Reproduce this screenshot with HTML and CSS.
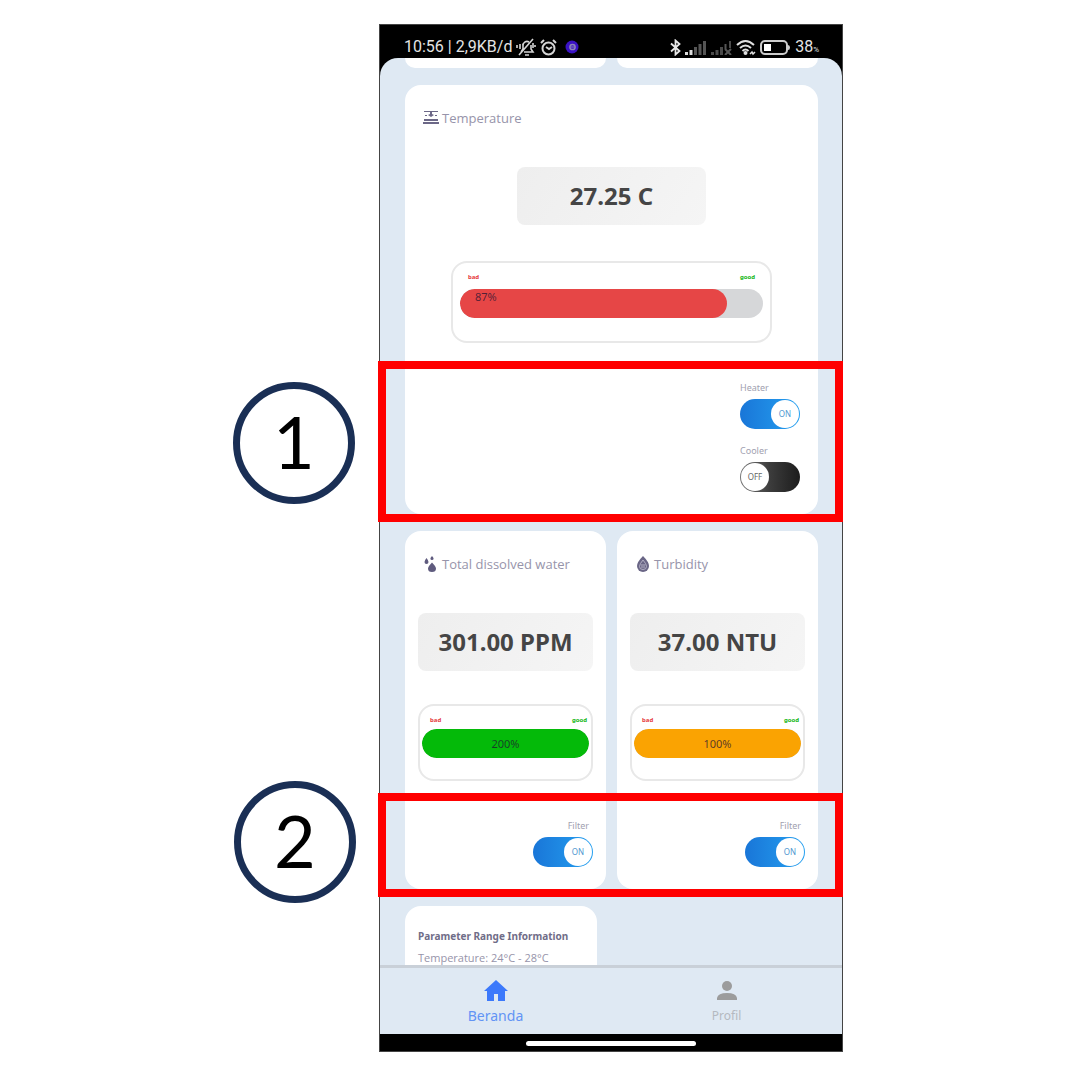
FILE: index.html
```html
<!DOCTYPE html>
<html lang="id">
<head>
<meta charset="utf-8">
<meta name="viewport" content="width=device-width, initial-scale=1">
<title>Beranda</title>
<link rel="stylesheet" href="styles.css">
</head>
<body>
<main class="figure">
  <div class="phone">
    <header class="status">
      <div class="status-group">
        <span>10:56 | 2,9KB/d</span>
        <svg class="icon-muted" width="20" height="18" viewBox="0 0 20 18" fill="none" stroke="#d5d5d5" stroke-width="1.600"><path d="M5 14 7 11V8a4 4 0 0 1 6-4M15 7v4l2 3H8M3 17 17 1M9 17h4M1 7v3M4 6v5M17 5v5M19 7v2"/></svg>
        <svg class="icon-alarm" width="17" height="17" viewBox="0 0 17 17" fill="none" stroke="#d5d5d5" stroke-width="2"><circle cx="8.500" cy="9.500" r="6"/><path d="M1 4 4 1M16 4 13 1M6 8l3 2 3-2"/></svg>
        <svg class="icon-app" width="14" height="14" viewBox="0 0 14 14"><circle cx="7" cy="7" r="6.500" fill="#3a12c4"/><circle cx="7.500" cy="7" r="2.600" fill="none" stroke="#8d86b8" stroke-width="1.500"/><path d="M6 7h3" stroke="#8d86b8"/></svg>
      </div>
      <div class="status-group">
        <svg width="11" height="17" viewBox="0 0 11 17" fill="none" stroke="#e8e8e8" stroke-width="1.800"><path d="M1 4.500 9.500 12 5.500 15.500V1.500L9.500 5 1 12.500"/></svg>
        <svg class="icon-signal" width="22" height="15" viewBox="0 0 22 15"><path fill="#ddd" d="M0 12h3v3H0zM4.500 10h3v5h-3z"/><path fill="#555" d="M9 7h3v8H9zM13.500 4h3v11h-3zM18 1h3v14h-3z"/></svg>
        <svg class="icon-signal" width="21" height="15" viewBox="0 0 21 15"><path fill="#4a4a4a" d="M0 12h3v3H0zM4.500 10h3v5h-3zM9 7h3v8H9zM18 1h2v7h-2z"/><path d="M14.500 4v5M14 9l6 6M20 9l-6 6" fill="none" stroke="#555" stroke-width="2"/></svg>
        <svg class="icon-wifi" width="20" height="17" viewBox="0 0 20 17" fill="none" stroke="#e0e0e0" stroke-width="2"><path d="M1 6q8.500-8 17 0M4 9q5.500-5 11 0M6.500 12q3-3 6 0"/><circle cx="9.500" cy="14" r="1" fill="#e0e0e0"/><path d="M14 15l2-2 1 2 2-2" stroke-width="1.500"/></svg>
        <svg class="icon-battery" width="31" height="15" viewBox="0 0 31 15"><rect x="1" y="1" width="26" height="13" rx="4" fill="none" stroke="#ccc" stroke-width="2"/><rect x="4" y="4" width="7" height="7" fill="#fff"/><path d="M28 5q2 0 2 2.500t-2 2.500z" fill="#ccc"/></svg>
        <span>38<small>%</small></span>
      </div>
    </header>

    <div class="screen">
      <div class="content">
        <div class="pair">
          <div class="card-end"></div>
          <div class="card-end"></div>
        </div>

        <section class="section">
          <article class="card">
            <h2 class="title">
              <svg width="16" height="14" viewBox="0 0 16 14" fill="#6c6887"><path d="M1 0h14v1H9v2l2 1-3 2-3-2 2-1V1H1zM1 8h14v2H1zM0 11h16v2H0z"/><path d="M2 4h2v1H2zM12 4h2v1h-2z"/></svg>
              Temperature
            </h2>
            <div class="value value-wide">27.25 C</div>
            <div class="gauge gauge-wide">
              <div class="scale"><span class="bad">bad</span><span class="good">good</span></div>
              <div class="bar"><div class="fill fill-red" style="width:88%">87%</div></div>
            </div>
            <div class="controls controls-wide">
              <label class="control"><span>Heater</span>
                <span class="switch"><input type="checkbox" role="switch" checked><span class="knob">ON</span></span>
              </label>
              <label class="control"><span>Cooler</span>
                <span class="switch"><input type="checkbox" role="switch"><span class="knob">OFF</span></span>
              </label>
            </div>
          </article>
          <div class="highlight highlight-tall"><span class="number number-first">1</span></div>
        </section>

        <section class="section pair">
          <article class="card">
            <h2 class="title">
              <svg width="16" height="16" viewBox="0 0 16 16" fill="#5f5b7e"><path d="M9 6.500q4 4 4 6a4 3.500 0 0 1-8 0q0-2 4-6zM3.500 2q2 2.500 2 4a2 2 0 0 1-4 0q0-1.500 2-4zM9 0q1.600 1.600 1.600 2.600a1.600 1.500 0 0 1-3.200 0Q7.400 1.600 9 0z"/></svg>
              Total dissolved water
            </h2>
            <div class="value">301.00 PPM</div>
            <div class="gauge">
              <div class="scale"><span class="bad">bad</span><span class="good">good</span></div>
              <div class="bar"><div class="fill fill-green" style="width:100%">200%</div></div>
            </div>
            <div class="controls">
              <label class="control control-end"><span>Filter</span>
                <span class="switch"><input type="checkbox" role="switch" checked><span class="knob">ON</span></span>
              </label>
            </div>
          </article>
          <article class="card">
            <h2 class="title">
              <svg width="16" height="16" viewBox="0 0 16 16"><path d="M8 0q6 6 6 10a6 6 0 0 1-12 0Q2 6 8 0z" fill="#6a6686"/><path d="M8 4q3.500 4 3.500 6.500a3.500 3 0 0 1-7 0Q4.500 8 8 4zM6 9h4M6 11h4" fill="none" stroke="#b3b0c4"/></svg>
              Turbidity
            </h2>
            <div class="value">37.00 NTU</div>
            <div class="gauge">
              <div class="scale"><span class="bad">bad</span><span class="good">good</span></div>
              <div class="bar"><div class="fill fill-orange" style="width:100%">100%</div></div>
            </div>
            <div class="controls">
              <label class="control control-end"><span>Filter</span>
                <span class="switch"><input type="checkbox" role="switch" checked><span class="knob">ON</span></span>
              </label>
            </div>
          </article>
          <div class="highlight highlight-short"><span class="number number-second">2</span></div>
        </section>

        <section class="info">
          <h2>Parameter Range Information</h2>
          <p>Temperature: 24°C - 28°C</p>
        </section>
      </div>

      <nav class="tabs">
        <a class="tab tab-active" href="#beranda">
          <svg width="24" height="22" viewBox="0 0 24 22" fill="#3c79fb"><path d="M12 0 24 11h-3v10h-7v-7h-4v7H3V11H0z"/></svg>
          Beranda
        </a>
        <a class="tab" href="#profil">
          <svg width="20" height="22" viewBox="0 0 20 22" fill="#9c9c9c"><circle cx="10" cy="6" r="5"/><path d="M0 20v-2q1-5 10-5t10 5v2z"/></svg>
          Profil
        </a>
      </nav>
    </div>
    <footer class="gesture"><span></span></footer>
  </div>
</main>
</body>
</html>
```
FILE: styles.css
```css
* { box-sizing: border-box; }

body {
  margin: 0;
  background: #fff;
  font-family: "Noto Sans", "Open Sans", sans-serif;
  color: #9794aa;
}

h2, p { margin: 0; }
svg { flex: none; display: block; }

/* left gutter holds the numbered markers */
.figure {
  max-width: 606px;
  margin: 0 auto;
  padding: 24px 0 24px 142px;
}

.phone {
  background: #000;
  border: 1px solid #444;
}

.status {
  display: flex;
  justify-content: space-between;
  align-items: center;
  padding: 11px 23px 0 24px;
  color: #e4e4e4;
  font: 400 16px/22px Roboto, sans-serif;
}
.status-group { display: flex; align-items: center; gap: 4px; }
.status small { font-size: 8px; line-height: 1; }
.icon-app { margin-left: 4px; }

.screen {
  background: #dfe9f3;
  border-radius: 18px 18px 0 0;
}
.content {
  display: flex;
  flex-direction: column;
  gap: 17px;
  padding: 0 24px 0 25px;
}
.pair {
  display: grid;
  grid-template-columns: 1fr 1fr;
  gap: 11px;
}
.card-end {
  height: 10px;
  background: #fff;
  border-radius: 0 0 16px 16px;
}
.section { position: relative; }

.card {
  background: #fff;
  border-radius: 16px;
  padding: 24px 13px 22px;
}
.title {
  display: flex;
  align-items: center;
  gap: 3px;
  padding-left: 5px;
  font-family: "Open Sans", sans-serif;
  font-size: 13px;
  font-weight: 400;
  line-height: 18px;
  white-space: nowrap;
}
.value {
  margin-top: 40px;
  border-radius: 8px;
  background: linear-gradient(120deg, #eee, #f5f5f5);
  color: #454545;
  font-size: 24px;
  font-weight: 700;
  line-height: 58px;
  text-align: center;
  white-space: nowrap;
}
.value-wide { width: 49%; margin-inline: auto; }

.gauge {
  margin-top: 33px;
  padding: 9px 2px 21px;
  border: 2px solid #e8e8e8;
  border-radius: 16px;
}
.gauge-wide {
  width: 83%;
  margin: 36px auto 0;
  padding: 9px 7px 23px;
}
.scale {
  display: flex;
  justify-content: space-between;
  padding: 0 2px 0 8px;
  margin-bottom: 4px;
  font-size: 6px;
  font-weight: 700;
  line-height: 10px;
}
.gauge-wide .scale { padding-right: 8px; margin-bottom: 7px; }
.bad { color: #e5383b; }
.good { color: #10b414; }
.bar {
  border-radius: 15px;
  background: #d6d7d9;
  overflow: hidden;
}
.fill {
  height: 29px;
  border-radius: 15px;
  color: rgb(30 20 50 / 75%);
  font-size: 11px;
  line-height: 29px;
  text-align: center;
}
.gauge-wide .fill {
  padding-left: 15px;
  line-height: 15px;
  text-align: left;
}
.fill-red { background: #e64646; }
.fill-green { background: #04ba09; }
.fill-orange { background: #faa302; }

.controls {
  display: flex;
  flex-direction: column;
  align-items: flex-end;
  gap: 16px;
  margin-top: 39px;
}
.controls-wide { padding-right: 5px; }
.control {
  display: flex;
  flex-direction: column;
  gap: 5px;
  font-size: 9px;
  line-height: 12px;
  color: #a19fb0;
}
.control-end { text-align: right; }
.controls:not(.controls-wide) .control > span:first-child { padding-right: 4px; }
.switch { position: relative; display: block; }
.switch input {
  appearance: none;
  display: block;
  width: 60px;
  height: 30px;
  margin: 0;
  border-radius: 15px;
  background: linear-gradient(90deg, #777, #3c3c3c 50%, #1c1c1c);
}
.switch input:checked { background: linear-gradient(90deg, #1976d8, #25a0f0); }
.knob {
  position: absolute;
  top: 1px;
  left: 1px;
  width: 28px;
  border-radius: 50%;
  background: #fff;
  color: #666;
  font-size: 8px;
  line-height: 28px;
  text-align: center;
}
.switch input:checked + .knob { left: auto; right: 1px; color: #4e96cf; }

.info {
  width: 192px;
  padding: 22px 13px 0;
  overflow: hidden;
  border-radius: 16px 16px 0 0;
  background: #fff;
  white-space: nowrap;
}
.info h2 {
  margin-bottom: 6px;
  color: #706d88;
  font-size: 10px;
  line-height: 16px;
}
.info p { font-family: "Open Sans", sans-serif; font-size: 11px; line-height: 15px; }

.tabs {
  display: grid;
  grid-template-columns: 1fr 1fr;
  padding: 12px 0 8px;
  border-top: 3px solid #c9d0d8;
}
.tab {
  display: flex;
  flex-direction: column;
  align-items: center;
  gap: 4px;
  color: #b4b9c0;
  font-size: 12px;
  line-height: 20px;
  text-decoration: none;
}
.tab-active { color: #6294f5; font-size: 14px; }

.gesture { padding: 7px 0 5px; }
.gesture span {
  display: block;
  width: 37%;
  height: 5px;
  margin: 0 auto;
  border-radius: 3px;
  background: #fff;
}

/* annotation frames drawn over the phone */
.highlight {
  position: absolute;
  left: -27px;
  right: -25px;
  bottom: -8px;
  border: 8px solid #f00;
  pointer-events: none;
}
.highlight-tall { height: 161px; }
.highlight-short { height: 104px; }
.number {
  position: absolute;
  left: -153px;
  width: 122px;
  height: 122px;
  border: 7px solid #1a2f55;
  border-radius: 50%;
  color: #000;
  font: 400 72px/104px Lato, sans-serif;
  text-align: center;
}
.number-first { top: 13px; }
.number-second { top: -20px; left: -152px; }
```
